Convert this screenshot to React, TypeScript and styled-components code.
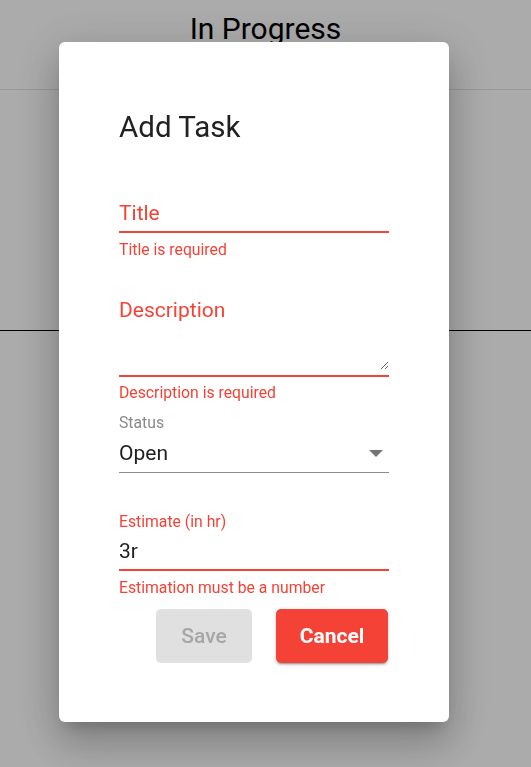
import React from "react";
import styled, { createGlobalStyle } from "styled-components";

const red = "#f44336";

const GlobalStyle = createGlobalStyle`
  html, body {
    margin: 0;
    padding: 0;
    background: #ffffff;
    font-family: Roboto, "Liberation Sans", Arial, sans-serif;
  }
  * {
    box-sizing: border-box;
  }
`;

const Board = styled.div`
  min-height: 767px;
`;

const BoardHeader = styled.header`
  height: 90px;
  padding-top: 11px;
  border-bottom: 1px solid #e3e3e3;
  text-align: center;
`;

const BoardTitle = styled.h2`
  margin: 0;
  font-size: 30px;
  line-height: 36px;
  font-weight: 400;
  color: #000;
`;

const Column = styled.section`
  height: 241px;
  border-bottom: 1px solid #000;
`;

const Backdrop = styled.div`
  position: fixed;
  inset: 0;
  background: rgba(0, 0, 0, 0.33);
  display: flex;
  align-items: flex-start;
  padding: 42px 0 0 59px;
`;

const Paper = styled.div`
  width: 390px;
  background: #fff;
  border-radius: 6px;
  padding: 68px 60px 59px;
  box-shadow: 0px 11px 15px -7px rgba(0, 0, 0, 0.2),
    0px 24px 38px 3px rgba(0, 0, 0, 0.14), 0px 9px 46px 8px rgba(0, 0, 0, 0.12);
`;

const DialogTitle = styled.h1`
  margin: 0;
  font-size: 29.5px;
  line-height: 34px;
  font-weight: 400;
  color: #212121;
`;

const Field = styled.div<{ $gap: number }>`
  margin-top: ${(p) => p.$gap}px;
`;

const InputBox = styled.div<{ $error?: boolean; $thin?: boolean }>`
  display: flex;
  align-items: center;
  padding-bottom: ${(p) => (p.$thin ? 7 : 6)}px;
  border-bottom: ${(p) => (p.$thin ? 1.5 : 2)}px solid
    ${(p) => (p.$error ? red : "#8c8c8c")};
`;

const Placeholder = styled.span`
  font-size: 21px;
  line-height: 24px;
  color: ${red};
`;

const BigText = styled.span`
  flex: 1;
  font-size: 21px;
  line-height: 24px;
  color: #212121;
`;

const DescBox = styled.div`
  border-bottom: 2px solid ${red};
  padding-bottom: 5px;
`;

const TextArea = styled.textarea`
  display: block;
  width: 100%;
  height: 48px;
  margin: 0;
  padding: 0;
  border: none;
  outline: none;
  background: transparent;
  resize: vertical;
  font: inherit;
`;

const SmallLabel = styled.div<{ $error?: boolean }>`
  font-size: 15.75px;
  line-height: 18px;
  color: ${(p) => (p.$error ? red : "#8a8a8a")};
`;

const Helper = styled.div<{ $gap: number }>`
  margin-top: ${(p) => p.$gap}px;
  font-size: 15.75px;
  line-height: 18px;
  color: ${red};
`;

const Arrow = styled.span`
  width: 0;
  height: 0;
  margin-right: 6px;
  border-left: 7px solid transparent;
  border-right: 7px solid transparent;
  border-top: 7px solid #757575;
`;

const Actions = styled.div`
  display: flex;
  justify-content: flex-end;
  gap: 24px;
  margin-top: 12px;
  padding-right: 1px;
`;

const Button = styled.button<{ $primary?: boolean }>`
  height: 54px;
  width: ${(p) => (p.$primary ? 112 : 96)}px;
  border: none;
  border-radius: 5px;
  font-family: Roboto, "Liberation Sans", Arial, sans-serif;
  font-size: 21px;
  font-weight: ${(p) => (p.$primary ? 700 : 500)};
  color: ${(p) => (p.$primary ? "#fff" : "#a6a6a6")};
  background: ${(p) => (p.$primary ? red : "#e0e0e0")};
  box-shadow: ${(p) =>
    p.$primary
      ? "0px 3px 1px -2px rgba(0,0,0,0.2), 0px 2px 2px 0px rgba(0,0,0,0.14), 0px 1px 5px 0px rgba(0,0,0,0.12)"
      : "none"};
`;

export default function App() {
  return (
    <>
      <GlobalStyle />
      <Board>
        <BoardHeader>
          <BoardTitle>In Progress</BoardTitle>
        </BoardHeader>
        <Column />
      </Board>
      <Backdrop>
        <Paper>
          <DialogTitle>Add Task</DialogTitle>

          <Field $gap={57}>
            <InputBox $error>
              <Placeholder>Title</Placeholder>
            </InputBox>
            <Helper $gap={8}>Title is required</Helper>
          </Field>

          <Field $gap={39}>
            <DescBox>
              <Placeholder>Description</Placeholder>
              <TextArea aria-label="Description" />
            </DescBox>
            <Helper $gap={7}>Description is required</Helper>
          </Field>

          <Field $gap={12}>
            <SmallLabel>Status</SmallLabel>
            <InputBox $thin style={{ marginTop: 9 }}>
              <BigText>Open</BigText>
              <Arrow />
            </InputBox>
          </Field>

          <Field $gap={40}>
            <SmallLabel $error>Estimate (in hr)</SmallLabel>
            <InputBox $error style={{ marginTop: 8 }}>
              <BigText>3r</BigText>
            </InputBox>
            <Helper $gap={8}>Estimation must be a number</Helper>
          </Field>

          <Actions>
            <Button disabled>Save</Button>
            <Button $primary>Cancel</Button>
          </Actions>
        </Paper>
      </Backdrop>
    </>
  );
}
